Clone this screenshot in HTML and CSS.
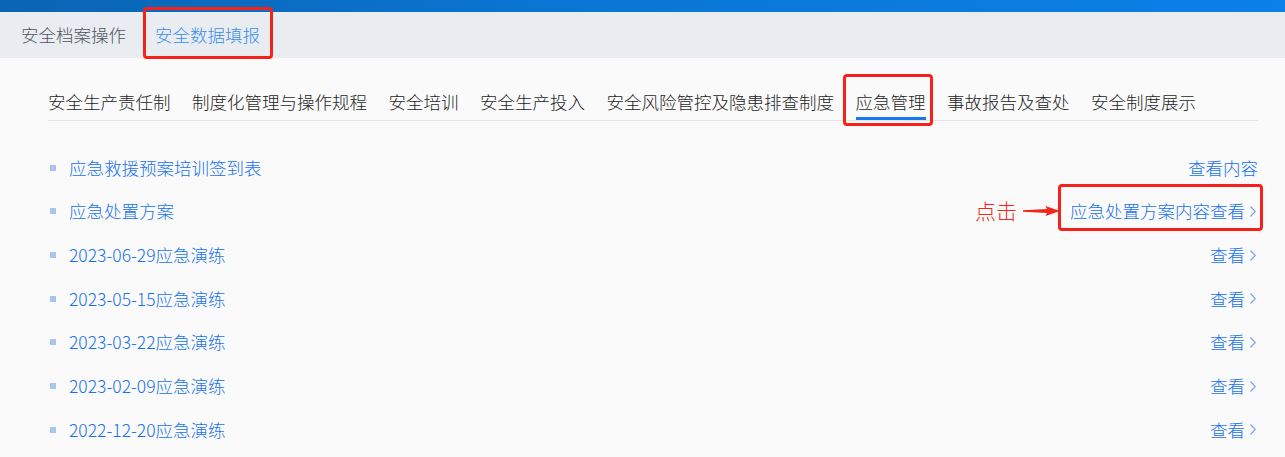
FILE: index.html
```html
<!DOCTYPE html>
<html lang="zh-CN">
<head>
  <meta charset="UTF-8">
  <title>安全数据填报</title>
  <link rel="stylesheet" href="styles.css">
</head>
<body>

  <div class="topbar"></div>

  <div class="tabs">
    <a href="#" class="tab">安全档案操作</a>
    <a href="#" class="tab active marked">安全数据填报</a>
  </div>

  <main class="content">
    <nav class="subnav">
      <a href="#">安全生产责任制</a>
      <a href="#">制度化管理与操作规程</a>
      <a href="#">安全培训</a>
      <a href="#">安全生产投入</a>
      <a href="#">安全风险管控及隐患排查制度</a>
      <a href="#" class="active marked">应急管理</a>
      <a href="#">事故报告及查处</a>
      <a href="#">安全制度展示</a>
    </nav>

    <ul class="list">
      <li>
        <span class="title">应急救援预案培训签到表</span>
        <a href="#" class="more plain">查看内容</a>
      </li>
      <li>
        <span class="title">应急处置方案</span>
        <a href="#" class="more marked">
          <span class="note">点击
            <svg width="37" height="10" viewBox="0 0 37 10"><path d="M0 4.3 L24 3 L22.5 0 L37 5 L22.5 10 L24 7 L0 5.7 Z" fill="#f0261c"/></svg>
          </span>
          应急处置方案内容查看
          <svg class="chev" width="6" height="11" viewBox="0 0 6 11"><path d="M0.5 0.5 L5.3 5.5 L0.5 10.5" fill="none" stroke="#6fa3f0" stroke-width="1.1"/></svg>
        </a>
      </li>
    </ul>
  </main>

  <script>
    const drills = ["2023-06-29", "2023-05-15", "2023-03-22", "2023-02-09", "2022-12-20"];
    const list = document.querySelector(".list");
    drills.forEach(date => {
      const li = document.createElement("li");
      li.innerHTML =
        '<span class="title">' + date + '应急演练</span>' +
        '<a href="#" class="more">查看' +
        '<svg class="chev" width="6" height="11" viewBox="0 0 6 11"><path d="M0.5 0.5 L5.3 5.5 L0.5 10.5" fill="none" stroke="#6fa3f0" stroke-width="1.1"/></svg>' +
        '</a>';
      list.appendChild(li);
    });
  </script>

</body>
</html>
```

FILE: styles.css
```css
body {
  font-family: "Noto Sans CJK SC", "Microsoft YaHei", sans-serif;
  font-weight: 300;
  background-color: #fafafa;
  color: #222;
  margin: 0;
  padding: 0;
  font-size: 17.5px;
}

a {
  text-decoration: none;
}

.topbar {
  height: 12px;
  background: linear-gradient(90deg, #0a64b4, #0a76d4 45%, #0b80e8);
}

.tabs {
  display: flex;
  gap: 5px;
  height: 46px;
  padding-left: 9px;
  background-color: #e9edf1;
}

.tab {
  display: flex;
  align-items: center;
  padding: 0 12px;
  color: #50545b;
  line-height: 24px;
}

.tab.active {
  color: #3a8eea;
}

.marked {
  position: relative;
}

.marked::after {
  content: "";
  position: absolute;
  border: 3px solid #f5221b;
  border-radius: 4px;
  pointer-events: none;
}

.tab.marked::after {
  top: -5px;
  bottom: -1px;
  left: 0;
  right: -1px;
}

.content {
  padding: 32px 27px 0 48px;
}

.subnav {
  display: flex;
  gap: 21.5px;
  border-bottom: 1px solid #e2e4ea;
}

.subnav a {
  color: #1e1e1e;
  line-height: 24px;
  padding-bottom: 3px;
  border-bottom: 3px solid transparent;
}

.subnav a.active {
  border-bottom-color: #1677f2;
}

.subnav a.marked::after {
  top: -16px;
  bottom: -9px;
  left: -13px;
  right: -7px;
}

.list {
  list-style: none;
  margin: 25px 0 0;
  padding: 0;
}

.list li {
  display: flex;
  align-items: center;
  justify-content: space-between;
  height: 43.67px;
}

.title {
  display: flex;
  align-items: center;
  gap: 13px;
  color: #1672ee;
  line-height: 24px;
}

.title::before {
  content: "";
  width: 6px;
  height: 6px;
  margin-left: 2px;
  background-color: #a8c6ee;
}

.more {
  display: flex;
  align-items: center;
  gap: 5px;
  color: #1672ee;
  line-height: 24px;
  margin-right: 2px;
}

.more.plain {
  margin-right: 0;
}

.list .more.marked::after {
  top: -15px;
  bottom: -8px;
  left: -12px;
  right: -7px;
}

.note {
  position: absolute;
  right: calc(100% + 10px);
  top: -1px;
  display: flex;
  align-items: center;
  gap: 6px;
  color: #f0261c;
  font-size: 21px;
  white-space: nowrap;
}

.note svg {
  margin-top: 2px;
}
```
